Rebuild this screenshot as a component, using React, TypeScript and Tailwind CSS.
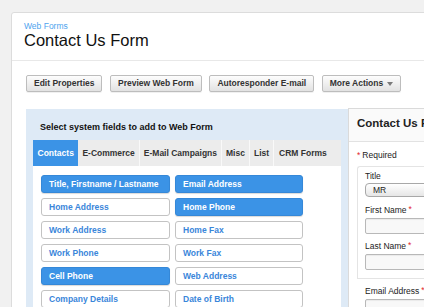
import React from "react";

const actions = ["Edit Properties", "Preview Web Form", "Autoresponder E-mail"];

const tabs = ["Contacts", "E-Commerce", "E-Mail Campaigns", "Misc", "List", "CRM Forms"];

const fields: { label: string; active: boolean }[] = [
  { label: "Title, Firstname / Lastname", active: true },
  { label: "Email Address", active: true },
  { label: "Home Address", active: false },
  { label: "Home Phone", active: true },
  { label: "Work Address", active: false },
  { label: "Home Fax", active: false },
  { label: "Work Phone", active: false },
  { label: "Work Fax", active: false },
  { label: "Cell Phone", active: true },
  { label: "Web Address", active: false },
  { label: "Company Details", active: false },
  { label: "Date of Birth", active: false },
];

function ActionButton({ children }: { children: React.ReactNode }) {
  return (
    <button className="h-[17px] px-[7px] flex items-center gap-[4px] whitespace-nowrap border border-[#bdbdbd] rounded-[2px] bg-linear-to-b from-[#fdfdfd] to-[#e2e2e2] shadow-[0_1px_0_rgba(0,0,0,0.06)] text-[8.5px] font-bold leading-none text-[#333]">
      {children}
    </button>
  );
}

function Label({ text, required }: { text: string; required?: boolean }) {
  return (
    <div className="text-[8.5px] leading-[11px] text-[#222] whitespace-nowrap">
      {text}
      {required && <span className="text-[#e2262b] ml-[2px] relative -top-[1px]">*</span>}
    </div>
  );
}

function TextInput() {
  return <div className="h-[16px] w-[120px] border border-[#b8b8b8] rounded-[2px] bg-[#f8f8f8] shadow-[inset_0_1px_1px_rgba(0,0,0,0.06)]" />;
}

export default function App() {
  return (
    <div className="w-[424px] h-[307px] overflow-hidden bg-[#f1f1f1] pt-[12px] pl-[11px] font-['Liberation_Sans',Arial,sans-serif]">
      <div className="w-[480px] h-[320px] bg-white border border-[#dcdcdc] rounded-tl-[3px]">
        {/* Header */}
        <div className="pt-[8px] pb-[10px] px-[12px] border-b border-[#e8e8e8]">
          <div className="text-[8.5px] leading-[10px] text-[#4ea3ee]">Web Forms</div>
          <div className="text-[16.5px] leading-[19px] text-[#111]">Contact Us Form</div>
        </div>

        {/* Action buttons */}
        <div className="pt-[14px] pl-[14px] flex gap-[7.5px]">
          {actions.map((a) => (
            <ActionButton key={a}>{a}</ActionButton>
          ))}
          <ActionButton>
            More Actions
            <svg width="6" height="4" viewBox="0 0 6 4">
              <path d="M0 0 L6 0 L3 4 Z" fill="#7a7a7a" />
            </svg>
          </ActionButton>
        </div>

        {/* Builder */}
        <div className="mt-[17px] ml-[14px] flex">
          <div className="w-[322px] shrink-0 bg-[#deeaf6] pt-[13px] px-[7px] h-[220px]">
            <div className="pl-[7px] text-[9px] leading-[11px] font-bold text-[#111] whitespace-nowrap">
              Select system fields to add to Web Form
            </div>
            <div className="mt-[7px] bg-white h-[200px]">
              <div className="flex h-[26px] bg-[#ececec]">
                {tabs.map((t, i) => (
                  <div
                    key={t}
                    className={
                      i === 0
                        ? "px-[4.5px] shrink-0 whitespace-nowrap flex items-center bg-[#3b93e6] text-white text-[8.5px] font-bold"
                        : i === tabs.length - 1
                        ? "px-[5px] shrink-0 whitespace-nowrap flex items-center text-[#333] text-[8.5px] font-bold"
                        : "px-[4px] shrink-0 whitespace-nowrap flex items-center text-[#333] text-[8.5px] font-bold border-r border-[#f9f9f9]"
                    }
                  >
                    {t}
                  </div>
                ))}
              </div>
              <div className="pt-[9px] pl-[8px] grid grid-cols-[129px_128px] gap-x-[5px] gap-y-[5px]">
                {fields.map((f) => (
                  <div
                    key={f.label}
                    className={
                      f.active
                        ? "h-[18px] pl-[7px] flex items-center whitespace-nowrap rounded-[3px] border border-[#3588d8] bg-[#3b93e6] text-white text-[8.5px] font-bold shadow-[0_1px_1px_rgba(0,0,0,0.15)]"
                        : "h-[18px] pl-[7px] flex items-center whitespace-nowrap rounded-[3px] border border-[#c3c3c3] bg-white text-[#3a86da] text-[8.5px] font-bold"
                    }
                  >
                    {f.label}
                  </div>
                ))}
              </div>
            </div>
          </div>

          {/* Preview panel */}
          <div className="flex-1 border-l border-t border-[#dadada] bg-white -mt-[1px]">
            <div className="pt-[7px] pb-[10px] pl-[8px] bg-[#fafafa] border-b border-[#e2e2e2]">
              <div className="text-[11.5px] leading-[15px] font-bold text-[#222] whitespace-nowrap">Contact Us Form</div>
            </div>
            <div className="pl-[8px] pt-[8px]">
              <div className="text-[8.5px] leading-[11px] text-[#222]">
                <span className="text-[#e2262b] mr-[2px]">*</span>Required
              </div>
              <div className="mt-[5px] border-l border-t border-b border-[#e4e4e4] rounded-tl-[3px] pl-[7px] pt-[4px] pb-[8px]">
                <Label text="Title" />
                <div className="h-[14px] w-[120px] mt-[1px] border border-[#a8a8a8] rounded-[4px] bg-linear-to-b from-white to-[#e6e6e6] pl-[7px] flex items-center text-[8.5px] text-[#222]">
                  MR
                </div>
                <div className="mt-[8px]">
                  <Label text="First Name" required />
                </div>
                <div className="mt-[2px]">
                  <TextInput />
                </div>
                <div className="mt-[7px]">
                  <Label text="Last Name" required />
                </div>
                <div className="mt-[2px]">
                  <TextInput />
                </div>
              </div>
              <div className="pl-[8px] pt-[7px]">
                <Label text="Email Address" required />
                <div className="mt-[2px]">
                  <TextInput />
                </div>
              </div>
            </div>
          </div>
        </div>
      </div>
    </div>
  );
}
